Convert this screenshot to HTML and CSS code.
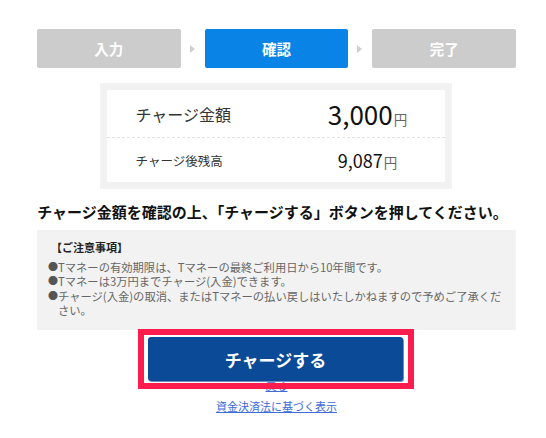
FILE: index.html
```html
<!DOCTYPE html>
<html lang="ja">
<head>
<meta charset="utf-8">
<link rel="stylesheet" href="styles.css">
</head>
<body>
<div class="wrap">
  <div class="steps">
    <div class="step">入力</div>
    <div class="arrow"></div>
    <div class="step active">確認</div>
    <div class="arrow"></div>
    <div class="step">完了</div>
  </div>

  <div class="summary">
    <div class="summary-inner">
      <div class="row row-main">
        <div class="label">チャージ金額</div>
        <div class="value"><span class="num">3,000</span><span class="yen">円</span></div>
      </div>
      <div class="row row-sub">
        <div class="label">チャージ後残高</div>
        <div class="value"><span class="num">9,087</span><span class="yen">円</span></div>
      </div>
    </div>
  </div>

  <p class="lead">チャージ金額を確認の上、「チャージする」ボタンを押してください。</p>

  <div class="notes">
    <p class="notes-title">【ご注意事項】</p>
    <ul class="notes-list">
      <li>Tマネーの有効期限は、Tマネーの最終ご利用日から10年間です。</li>
      <li>Tマネーは3万円までチャージ(入金)できます。</li>
      <li>チャージ(入金)の取消、またはTマネーの払い戻しはいたしかねますので予めご了承ください。</li>
    </ul>
  </div>

  <div class="btn-wrap">
    <button class="btn-charge">チャージする</button>
  </div>

  <div class="links">
    <a href="#" class="link">戻る</a>
    <a href="#" class="link">資金決済法に基づく表示</a>
  </div>
</div>
</body>
</html>
```

FILE: styles.css
```css
* { box-sizing: border-box; }
html, body { margin: 0; padding: 0; background: #fff; }
body {
  font-family: "Noto Sans CJK JP", "Noto Sans", sans-serif;
  color: #222;
  width: 546px;
}
.wrap {
  padding: 29px 30px 0 37px;
}
.steps {
  display: grid;
  grid-template-columns: 1fr 24px 1fr 24px 1fr;
  height: 39px;
}
.step {
  background: #cccccc;
  color: #fff;
  font-weight: bold;
  font-size: 14.5px;
  display: flex;
  align-items: center;
  justify-content: center;
  border-radius: 2px;
}
.step.active { background: #0a83e6; }
.arrow {
  display: flex;
  align-items: center;
  justify-content: center;
}
.arrow::before {
  content: "";
  width: 0; height: 0;
  border-top: 4px solid transparent;
  border-bottom: 4px solid transparent;
  border-left: 5px solid #cfcfcf;
  margin-right: 1px;
}
.summary {
  width: 352px;
  margin: 15px auto 0;
  border: 7px solid #f2f2f2;
  position: relative;
  left: -1px;
}
.summary-inner { background: #fff; }
.row {
  display: flex;
  align-items: center;
}
.row-main {
  height: 48px;
  border-bottom: 1px dashed #e2e2e2;
}
.row-sub { height: 44px; }
.label {
  flex: 0 0 200px;
  padding-left: 29px;
  color: #333;
}
.row-main .label { font-size: 16px; }
.row-sub .label { font-size: 12.5px; }
.value {
  width: 122px;
  text-align: center;
  color: #111;
  white-space: nowrap;
}
.row-main .num { font-size: 26px; }
.row-sub .num { font-size: 18px; }
.yen {
  font-size: 13.5px;
  color: #666;
  margin-left: 1px;
}
.lead {
  margin: 13px 0 0;
  font-size: 15px;
  line-height: 20px;
  font-weight: bold;
  color: #111;
  text-align: center;
  white-space: nowrap;
  position: relative;
  left: -4px;
}
.notes {
  margin-top: 8px;
  background: #f2f2f2;
  padding: 10px 12px 12px 11px;
  height: 100px;
}
.notes-title {
  margin: 0 0 5px 3px;
  font-size: 11px;
  line-height: 14.5px;
  font-weight: bold;
  color: #222;
}
.notes-list {
  list-style: none;
  margin: 0;
  padding: 0 0 0 10px;
  font-size: 11.3px;
  line-height: 14.5px;
  color: #666;
}
.notes-list li { position: relative; }
.notes-list li::before {
  content: "●";
  position: absolute;
  left: -10px;
  top: 0;
  font-size: 10px;
  color: #555;
}
.btn-wrap {
  width: 255px;
  margin: 7px auto 0;
  position: relative;
  left: -1px;
  z-index: 2;
}
.btn-wrap::after {
  content: "";
  position: absolute;
  top: -8px;
  left: -10px;
  right: -11px;
  bottom: -8px;
  border: 6px solid #fc1d4e;
  pointer-events: none;
}
.btn-charge {
  display: block;
  width: 100%;
  height: 44px;
  border: 0;
  border-radius: 3px;
  background: #0b4a97;
  box-shadow: 1px 1px 0 #6e8fc0;
  color: #fff;
  font-family: "Noto Sans CJK JP", sans-serif;
  font-size: 17px;
  font-weight: bold;
}
.links {
  margin-top: -6px;
  display: flex;
  flex-direction: column;
  align-items: center;
  position: relative;
  z-index: 1;
}
.link {
  font-size: 11px;
  line-height: 21px;
  color: #3d6cd9;
  text-decoration: underline;
}
```
